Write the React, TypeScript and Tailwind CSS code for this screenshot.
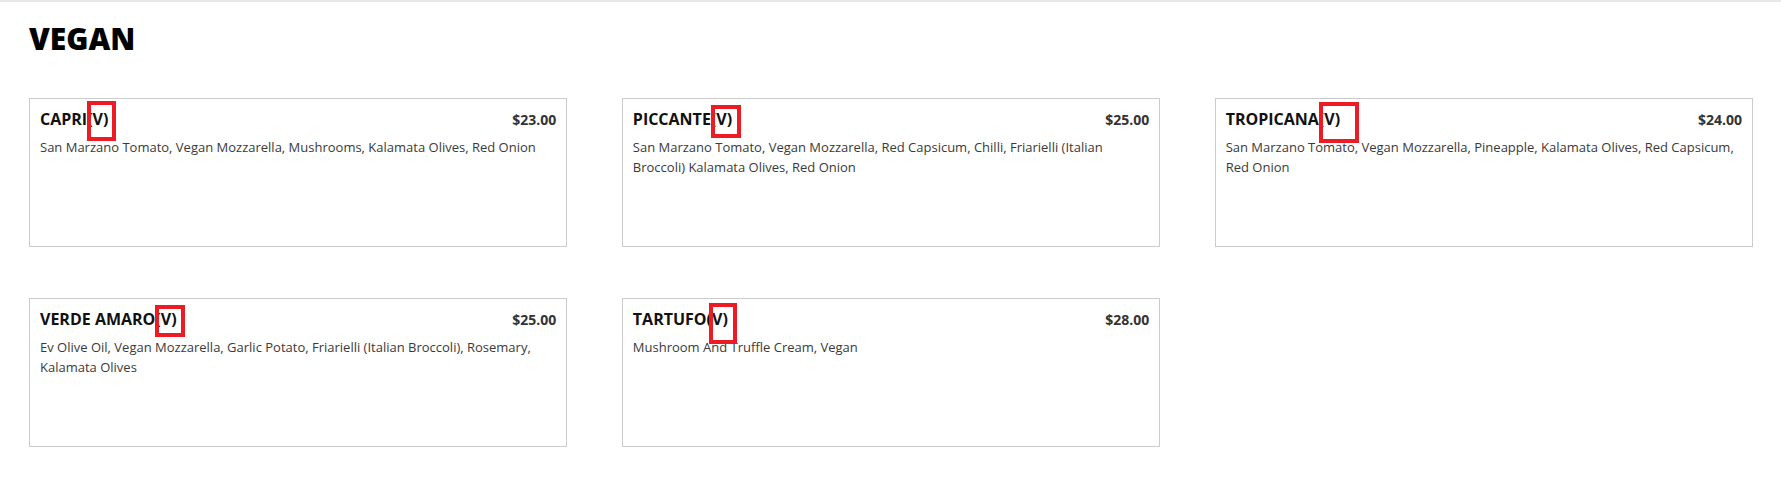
import React from "react";

type Item = {
  name: string;
  price: string;
  desc: string;
  box: { l: number; t: number; w: number; h: number };
};

const items: Item[] = [
  {
    name: "CAPRI(V)",
    price: "$23.00",
    desc: "San Marzano Tomato, Vegan Mozzarella, Mushrooms, Kalamata Olives, Red Onion",
    box: { l: 57, t: 2, w: 29, h: 40 },
  },
  {
    name: "PICCANTE(V)",
    price: "$25.00",
    desc: "San Marzano Tomato, Vegan Mozzarella, Red Capsicum, Chilli, Friarielli (Italian Broccoli) Kalamata Olives, Red Onion",
    box: { l: 88, t: 6, w: 30, h: 33 },
  },
  {
    name: "TROPICANA(V)",
    price: "$24.00",
    desc: "San Marzano Tomato, Vegan Mozzarella, Pineapple, Kalamata Olives, Red Capsicum, Red Onion",
    box: { l: 103, t: 3, w: 40, h: 41 },
  },
  {
    name: "VERDE AMARO(V)",
    price: "$25.00",
    desc: "Ev Olive Oil, Vegan Mozzarella, Garlic Potato, Friarielli (Italian Broccoli), Rosemary, Kalamata Olives",
    box: { l: 125, t: 6, w: 30, h: 32 },
  },
  {
    name: "TARTUFO(V)",
    price: "$28.00",
    desc: "Mushroom And Truffle Cream, Vegan",
    box: { l: 86, t: 4, w: 28, h: 41 },
  },
];

function Card({ item }: { item: Item }) {
  return (
    <div className="relative h-[149px] border border-[#cccccc] bg-white px-[10px] pt-[9px]">
      <div className="flex items-start justify-between">
        <div className="text-[16px] leading-[23px] font-bold text-[#111111]">{item.name}</div>
        <div className="pt-[1px] text-[14px] leading-[21px] font-bold text-[#333333]">{item.price}</div>
      </div>
      <p className="mt-[7px] text-[13px] leading-[19.5px] text-[#3a3a3a]">{item.desc}</p>
      <div
        className="pointer-events-none absolute border-[4px] border-[#ed1c24]"
        style={{ left: item.box.l, top: item.box.t, width: item.box.w, height: item.box.h }}
      />
    </div>
  );
}

export default function App() {
  return (
    <div
      className="min-h-[481px] w-full border-t-2 border-[#e8e8e8] bg-white"
      style={{ fontFamily: '"Open Sans", "Noto Sans", Arial, sans-serif' }}
    >
      <div className="pl-[29px] pr-[28px] pt-[19px]">
        <h1 className="text-[30px] leading-[36px] font-extrabold text-black">VEGAN</h1>
        <div className="mt-[41px] grid grid-cols-3 gap-x-[54.5px] gap-y-[51px]">
          {items.map((it) => (
            <Card key={it.name} item={it} />
          ))}
        </div>
      </div>
    </div>
  );
}
